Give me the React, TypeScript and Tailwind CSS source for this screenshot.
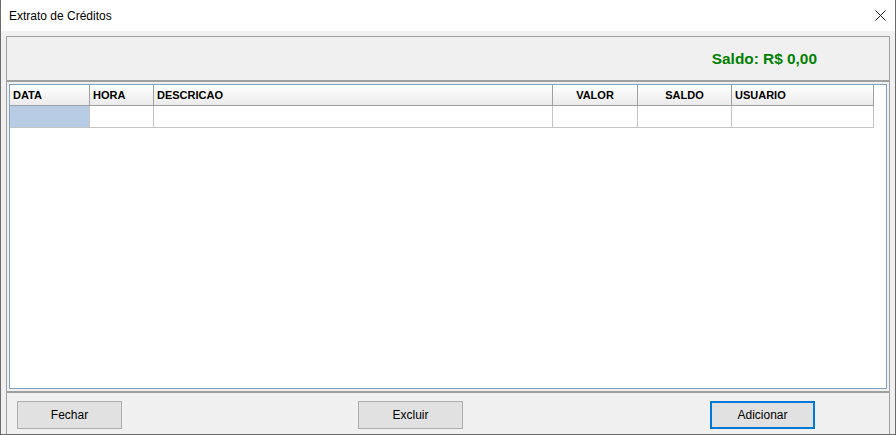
import React from 'react';

const columns = [
  { label: 'DATA', width: 'w-[80px]', align: 'text-left' },
  { label: 'HORA', width: 'w-[64px]', align: 'text-left' },
  { label: 'DESCRICAO', width: 'w-[399px]', align: 'text-left' },
  { label: 'VALOR', width: 'w-[85px]', align: 'text-center' },
  { label: 'SALDO', width: 'w-[94px]', align: 'text-center' },
  { label: 'USUARIO', width: 'w-[142px]', align: 'text-left' },
];

function CloseIcon() {
  return (
    <svg width="11" height="11" viewBox="0 0 11 11" fill="none" stroke="#1a1a1a" strokeWidth="1">
      <path d="M0.5 0.5 L10.5 10.5 M10.5 0.5 L0.5 10.5" />
    </svg>
  );
}

function Button({ label, focused, className }: { label: string; focused?: boolean; className?: string }) {
  return (
    <button
      className={
        'w-[105px] h-[28px] bg-[#e1e1e1] text-[12px] text-black flex items-center justify-center ' +
        (focused ? 'border-2 border-[#0078d7] ' : 'border border-[#adadad] ') +
        (className ?? '')
      }
    >
      {label}
    </button>
  );
}

export default function App() {
  return (
    <div className="w-[896px] h-[435px] flex flex-col border border-t-0 border-[#6b6b6b] bg-[#f0f0f0] font-['Liberation_Sans',Arial,sans-serif] text-black">
      {/* title bar */}
      <div className="h-[31px] shrink-0 bg-white flex items-center justify-between pl-[8px] pr-[9px]">
        <span className="text-[12px]">Extrato de Créditos</span>
        <CloseIcon />
      </div>

      <div className="flex-1 flex flex-col px-[5px] pt-[5px] min-h-0">
        {/* saldo panel */}
        <div className="h-[46px] shrink-0 border-t border-x border-b-2 border-[#a0a0a0] flex items-center justify-end pr-[72px]">
          <span className="text-[15.4px] font-bold text-[#008000]">Saldo: R$ 0,00</span>
        </div>

        {/* grid panel */}
        <div className="flex-1 min-h-0 border-x border-b-2 border-[#a0a0a0] p-[2px]">
          <div className="h-full border border-[#82a0c0] bg-white">
            <div className="flex h-[21px] border-b border-[#a0a0a0] w-[864px] bg-linear-to-b from-white to-[#ebebeb]">
              {columns.map((c) => (
                <div
                  key={c.label}
                  className={`${c.width} ${c.align} shrink-0 border-r border-[#a0a0a0] px-[3px] text-[11px] font-bold leading-[20px]`}
                >
                  {c.label}
                </div>
              ))}
            </div>
            <div className="flex h-[22px] w-[864px]">
              {columns.map((c, i) => (
                <div
                  key={c.label}
                  className={`${c.width} shrink-0 border-r border-b border-[#c4c4c4] ${i === 0 ? 'bg-[#b8cce6]' : ''}`}
                />
              ))}
            </div>
          </div>
        </div>

        {/* buttons */}
        <div className="h-[41px] shrink-0 border-x border-[#a0a0a0] flex items-start pt-[8px]">
          <Button label="Fechar" className="ml-[10px]" />
          <Button label="Excluir" className="ml-[236px]" />
          <Button label="Adicionar" focused className="ml-[247px]" />
        </div>
      </div>
    </div>
  );
}
